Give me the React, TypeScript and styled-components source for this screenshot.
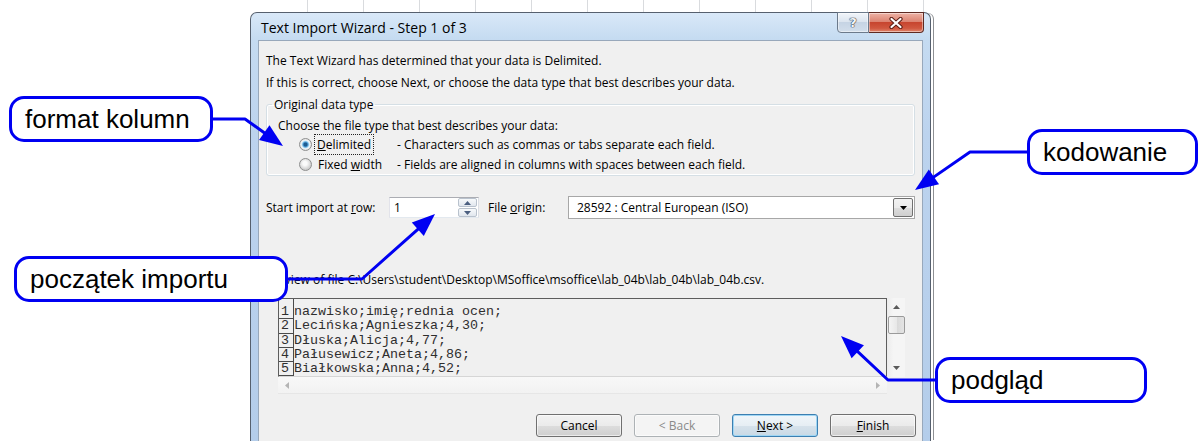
import React from "react";
import styled, { createGlobalStyle } from "styled-components";

type Pt = [number, number];

const BLUE = "#0000f2";
const UI_FONT = `"Open Sans", "Noto Sans", "Liberation Sans", sans-serif`;

const GlobalStyle = createGlobalStyle`
  html, body {
    margin: 0;
    padding: 0;
    background: #fff;
  }
  body {
    font-family: "Liberation Sans", Arial, sans-serif;
  }
`;

const Page = styled.div`
  position: relative;
  width: 1200px;
  height: 441px;
  overflow: hidden;
  background: #fff;
`;

// spreadsheet visible behind the dialog
const Sheet = styled.div`
  margin-left: 244px;
  width: 702px;
  height: 441px;
  padding: 12px 0 0 6px;
  box-sizing: border-box;
  background-color: #fff;
  background-image: repeating-linear-gradient(90deg, transparent 0 55px, #d9dbde 55px 56px);
  background-position: 8px 0;
`;

const Window = styled.div`
  width: 681px;
  height: 429px;
  box-sizing: border-box;
  border: 1px solid #56606e;
  border-bottom: none;
  border-radius: 7px 7px 0 0;
  padding: 0 7px;
  background: linear-gradient(180deg, #d9e8f8 0px, #c5dbf1 26px, #bcd3ee 120px, #b4cdea 100%);
  box-shadow: 3px 0 0 -1px #fff, 4px 0 0 -1px #8e9094;
  font-family: ${UI_FONT};
`;

const TitleBar = styled.div`
  height: 27px;
  display: flex;
  align-items: center;
  padding-left: 3px;
`;

const Title = styled.span`
  flex: 1;
  font-size: 14px;
  color: #000;
  padding-top: 1px;
`;

const CaptionButtons = styled.div`
  align-self: flex-start;
  display: flex;
  margin-top: -1px;
  margin-right: -1px;
`;

const CaptionButton = styled.div<{ $close?: boolean }>`
  width: ${(p) => (p.$close ? 55 : 32)}px;
  height: 21px;
  box-sizing: border-box;
  display: flex;
  align-items: center;
  justify-content: center;
  border: 1px solid ${(p) => (p.$close ? "#5e2a22" : "#6c7a8b")};
  border-left-width: ${(p) => (p.$close ? 0 : 1)}px;
  border-radius: ${(p) => (p.$close ? "0 0 4px 0" : "0 0 0 4px")};
  background: ${(p) =>
    p.$close
      ? "linear-gradient(180deg, #eeb3a6 0%, #dc8472 45%, #c7452f 50%, #d0573f 80%, #e0866f 100%)"
      : "linear-gradient(180deg, #f1f5fa 0%, #dce5ef 45%, #c6d4e4 50%, #d2deeb 100%)"};
  box-shadow: inset 0 0 0 1px rgba(255, 255, 255, 0.45);
`;

const HelpGlyph = styled.span`
  font: bold 13px "DejaVu Sans", sans-serif;
  color: #f3f6fa;
  text-shadow: 0 0 1px #2b3340, 0 0 1px #2b3340, 0 0 1px #2b3340;
`;

const Body = styled.div`
  height: 401px;
  box-sizing: border-box;
  background: #f0f0f0;
  border: 1px solid #98a8bb;
  border-bottom: none;
  padding: 12px 7px 0;
  font-size: 12px;
  line-height: 15px;
  color: #000;
`;

const Line = styled.p<{ $gap?: number }>`
  margin: ${(p) => p.$gap ?? 0}px 0 0;
  white-space: nowrap;
`;

const U = styled.span`
  text-decoration: underline;
  text-underline-offset: 1px;
`;

const Group = styled.fieldset`
  margin: 7px 0 0;
  padding: 0 6px 2px 5px;
  border: 1px solid #d5dfe5;
  border-radius: 3px;
  box-shadow: inset 0 0 0 1px #fff;
  min-width: 0;
`;

const Legend = styled.legend`
  padding: 0 2px;
  line-height: 15px;
`;

const GroupBody = styled.div`
  padding: 6px 0 0 6px;
`;

const RadioRow = styled.div<{ $gap: number }>`
  display: flex;
  align-items: center;
  height: 18px;
  margin: ${(p) => p.$gap}px 0 0 21px;
  white-space: nowrap;
`;

const RadioMark = styled.span<{ $checked?: boolean }>`
  width: 13px;
  height: 13px;
  box-sizing: border-box;
  margin-right: 6px;
  border-radius: 50%;
  border: 1px solid #8e8f8f;
  background: ${(p) =>
    p.$checked
      ? "radial-gradient(circle at 50% 50%, #1f5c91 0 1.5px, #5aa7dc 2.6px, #bfe3f8 3.6px, #f4f4f4 4.3px, #dadada 6px)"
      : "radial-gradient(circle at 45% 40%, #fbfbfb 0 2px, #e6e6e6 4px, #cfcfcf 6px)"};
`;

const RadioLabel = styled.span`
  width: 79px;
  flex: none;
`;

const FocusText = styled.span`
  outline: 1px dotted #222;
  outline-offset: 1px;
  padding: 0 1px;
  margin-left: -2px;
`;

const ImportRow = styled.div`
  display: flex;
  align-items: center;
  height: 23px;
  margin-top: 20px;
`;

const FieldLabel = styled.span<{ $w: number; $gap?: number }>`
  width: ${(p) => p.$w}px;
  flex: none;
  margin-left: ${(p) => p.$gap ?? 0}px;
  white-space: nowrap;
`;

const SpinBox = styled.div`
  width: 90px;
  height: 21px;
  box-sizing: border-box;
  display: flex;
  background: #fff;
  border: 1px solid;
  border-color: #abadb3 #dbdfe6 #e3e9ef #e2e3ea;
`;

const SpinValue = styled.span`
  flex: 1;
  padding-left: 4px;
  line-height: 19px;
`;

const SpinButtons = styled.div`
  width: 19px;
  display: flex;
  flex-direction: column;
  gap: 1px;
  padding: 0 1px 0 0;
`;

const SpinButton = styled.div`
  flex: 1;
  display: flex;
  align-items: center;
  justify-content: center;
  border: 1px solid #b9c2cd;
  border-radius: 2px;
  background: linear-gradient(180deg, #f7f9fb, #e1e7ee);
`;

const Combo = styled.div`
  flex: 1;
  height: 23px;
  box-sizing: border-box;
  display: flex;
  align-items: center;
  background: #fff;
  border: 1px solid #a7a7a7;
`;

const ComboText = styled.span`
  flex: 1;
  padding-left: 8px;
  white-space: nowrap;
`;

const ComboButton = styled.div`
  width: 20px;
  height: 19px;
  box-sizing: border-box;
  margin-right: 1px;
  display: flex;
  align-items: center;
  justify-content: center;
  border: 1px solid #707070;
  border-radius: 2px;
  background: linear-gradient(180deg, #f2f2f2 0%, #ebebeb 50%, #dddddd 51%, #cfcfcf 100%);
`;

const PreviewFrame = styled.div`
  margin: 11px 0 0 12px;
  display: grid;
  grid-template-columns: 609px 18px;
  grid-template-rows: 79px 17px;
`;

const PreviewBox = styled.div`
  display: flex;
  overflow: hidden;
  box-sizing: border-box;
  border: 1px solid #5d5d5d;
  border-bottom-color: #d6d6d6;
  background: #f0f0f0;
  font-family: "Liberation Mono", "Courier New", monospace;
  font-size: 13.33px;
  line-height: 14.3px;
  color: #2e2e2e;
`;

const NumColumn = styled.div`
  width: 14px;
  flex: none;
  padding-top: 6px;
  border-right: 1px solid #4a4a4a;
`;

const NumCell = styled.div`
  height: 14.3px;
  box-sizing: border-box;
  padding-left: 2px;
  border-bottom: 1px solid #4a4a4a;
`;

const TextColumn = styled.div`
  padding-top: 6px;
  white-space: pre;
`;

const VScroll = styled.div`
  display: flex;
  flex-direction: column;
  align-items: center;
  background: linear-gradient(90deg, #ebebeb 0%, #f5f5f5 35%, #f5f5f5 100%);
`;

const ScrollEnd = styled.div<{ $h: number }>`
  height: ${(p) => p.$h}px;
  width: 100%;
  display: flex;
  align-items: center;
  justify-content: center;
`;

const Thumb = styled.div`
  width: 17px;
  height: 18px;
  box-sizing: border-box;
  border: 1px solid #9a9a9a;
  border-radius: 2px;
  background: linear-gradient(90deg, #f4f4f4 0%, #e8e8e8 50%, #d9d9d9 51%, #e4e4e4 100%);
`;

const Track = styled.div`
  flex: 1;
`;

const HScroll = styled.div`
  display: flex;
  align-items: center;
  justify-content: space-between;
  padding: 0 7px;
  background: linear-gradient(180deg, #f8f8f8, #f2f2f2);
  border-bottom: 1px solid #e6e6e6;
`;

const Corner = styled.div`
  background: #f0f0f0;
`;

const ButtonRow = styled.div`
  display: flex;
  justify-content: flex-end;
  gap: 12px;
  margin-top: 20px;
  margin-right: -1px;
`;

const DialogButton = styled.div<{ $variant?: "default" | "disabled" }>`
  width: 86px;
  height: 23px;
  box-sizing: border-box;
  display: flex;
  align-items: center;
  justify-content: center;
  border-radius: 3px;
  border: 1px solid
    ${(p) => (p.$variant === "default" ? "#3c7fb1" : p.$variant === "disabled" ? "#adb2b5" : "#707070")};
  color: ${(p) => (p.$variant === "disabled" ? "#8a8a8a" : "#000")};
  background: ${(p) =>
    p.$variant === "disabled"
      ? "#f4f4f4"
      : p.$variant === "default"
      ? "linear-gradient(180deg, #f0f6fa 0%, #e6eef4 50%, #d6e2eb 51%, #c9d9e5 100%)"
      : "linear-gradient(180deg, #f2f2f2 0%, #ebebeb 50%, #dddddd 51%, #cfcfcf 100%)"};
  box-shadow: ${(p) => (p.$variant === "default" ? "inset 0 0 0 1px #9fd6f4" : "inset 0 0 0 1px rgba(255,255,255,0.6)")};
`;

const Callout = styled.div<{ $x: number; $y: number; $w: number }>`
  position: absolute;
  left: ${(p) => p.$x}px;
  top: ${(p) => p.$y}px;
  width: ${(p) => p.$w}px;
  height: 46px;
  box-sizing: border-box;
  display: flex;
  align-items: center;
  padding-left: 13px;
  border: 3px solid ${BLUE};
  border-radius: 15px;
  background: #fff;
  font-family: "Liberation Sans", Arial, sans-serif;
  font-size: 26px;
  color: #000;
  white-space: nowrap;
`;

const ArrowLayer = styled.svg`
  position: absolute;
  left: 0;
  top: 0;
  pointer-events: none;
`;

function Tri({ dir, color = "#4b5f80", w = 7, h = 4 }: { dir: "up" | "down" | "left" | "right"; color?: string; w?: number; h?: number }) {
  const vert = dir === "up" || dir === "down";
  const W = vert ? w : h;
  const H = vert ? h : w;
  const pts =
    dir === "up"
      ? `0,${H} ${W / 2},0 ${W},${H}`
      : dir === "down"
      ? `0,0 ${W},0 ${W / 2},${H}`
      : dir === "left"
      ? `${W},0 0,${H / 2} ${W},${H}`
      : `0,0 ${W},${H / 2} 0,${H}`;
  return (
    <svg width={W} height={H} viewBox={`0 0 ${W} ${H}`}>
      <polygon points={pts} fill={color} />
    </svg>
  );
}

function CloseGlyph() {
  return (
    <svg width="14" height="12" viewBox="0 0 14 12">
      <path d="M2.5 2 L11.5 10 M11.5 2 L2.5 10" stroke="#5a1e16" strokeWidth="4.2" strokeLinecap="round" />
      <path d="M2.5 2 L11.5 10 M11.5 2 L2.5 10" stroke="#fff" strokeWidth="2.2" strokeLinecap="round" />
    </svg>
  );
}

function Arrow({ points }: { points: Pt[] }) {
  const [tx, ty] = points[points.length - 1];
  const [px, py] = points[points.length - 2];
  const len = Math.hypot(tx - px, ty - py);
  const ux = (tx - px) / len;
  const uy = (ty - py) / len;
  const head = 23;
  const half = 9;
  const bx = tx - ux * head;
  const by = ty - uy * head;
  const shaft = [...points.slice(0, -1), [bx + ux * 3, by + uy * 3]]
    .map(([x, y]) => `${x},${y}`)
    .join(" ");
  return (
    <g>
      <polyline points={shaft} fill="none" stroke={BLUE} strokeWidth={3} strokeLinejoin="round" />
      <polygon
        points={`${tx},${ty} ${bx - uy * half},${by + ux * half} ${bx + uy * half},${by - ux * half}`}
        fill={BLUE}
      />
    </g>
  );
}

const callouts: { label: string; x: number; y: number; w: number; arrow: Pt[] }[] = [
  { label: "format kolumn", x: 9, y: 96, w: 204, arrow: [[211, 119], [245, 119], [283, 146]] },
  { label: "początek importu", x: 14, y: 256, w: 274, arrow: [[286, 279], [362, 279], [435, 214]] },
  { label: "kodowanie", x: 1027, y: 129, w: 171, arrow: [[1028, 152], [970, 152], [915, 190]] },
  { label: "podgląd", x: 935, y: 357, w: 212, arrow: [[936, 380], [888, 380], [841, 336]] },
];

const previewRows = [
  "nazwisko;imię;rednia ocen;",
  "Lecińska;Agnieszka;4,30;",
  "Dłuska;Alicja;4,77;",
  "Pałusewicz;Aneta;4,86;",
  "Białkowska;Anna;4,52;",
];

const filePath = "C:\\Users\\student\\Desktop\\MSoffice\\msoffice\\lab_04b\\lab_04b\\lab_04b.csv.";

export default function App() {
  return (
    <Page>
      <GlobalStyle />
      <Sheet>
        <Window>
          <TitleBar>
            <Title>Text Import Wizard - Step 1 of 3</Title>
            <CaptionButtons>
              <CaptionButton>
                <HelpGlyph>?</HelpGlyph>
              </CaptionButton>
              <CaptionButton $close>
                <CloseGlyph />
              </CaptionButton>
            </CaptionButtons>
          </TitleBar>

          <Body>
            <Line>The Text Wizard has determined that your data is Delimited.</Line>
            <Line $gap={7}>If this is correct, choose Next, or choose the data type that best describes your data.</Line>

            <Group>
              <Legend>Original data type</Legend>
              <GroupBody>
                <Line>Choose the file type that best describes your data:</Line>
                <RadioRow $gap={2}>
                  <RadioMark $checked />
                  <RadioLabel>
                    <FocusText>
                      <U>D</U>elimited
                    </FocusText>
                  </RadioLabel>
                  <span>- Characters such as commas or tabs separate each field.</span>
                </RadioRow>
                <RadioRow $gap={2}>
                  <RadioMark />
                  <RadioLabel>
                    Fixed <U>w</U>idth
                  </RadioLabel>
                  <span>- Fields are aligned in columns with spaces between each field.</span>
                </RadioRow>
              </GroupBody>
            </Group>

            <ImportRow>
              <FieldLabel $w={123}>
                Start import at <U>r</U>ow:
              </FieldLabel>
              <SpinBox>
                <SpinValue>1</SpinValue>
                <SpinButtons>
                  <SpinButton>
                    <Tri dir="up" w={7} h={4} />
                  </SpinButton>
                  <SpinButton>
                    <Tri dir="down" w={7} h={4} />
                  </SpinButton>
                </SpinButtons>
              </SpinBox>
              <FieldLabel $w={80} $gap={9}>
                File <U>o</U>rigin:
              </FieldLabel>
              <Combo>
                <ComboText>28592 : Central European (ISO)</ComboText>
                <ComboButton>
                  <Tri dir="down" color="#000" w={7} h={4} />
                </ComboButton>
              </Combo>
            </ImportRow>

            <Line $gap={53}>Preview of file {filePath}</Line>

            <PreviewFrame>
              <PreviewBox>
                <NumColumn>
                  {[1, 2, 3, 4, 5, 6].map((n) => (
                    <NumCell key={n}>{n < 6 ? n : ""}</NumCell>
                  ))}
                </NumColumn>
                <TextColumn>
                  {previewRows.map((row) => (
                    <div key={row}>{row}</div>
                  ))}
                </TextColumn>
              </PreviewBox>
              <VScroll>
                <ScrollEnd $h={18}>
                  <Tri dir="up" color="#5a5a5a" />
                </ScrollEnd>
                <Thumb />
                <Track />
                <ScrollEnd $h={18}>
                  <Tri dir="down" color="#5a5a5a" />
                </ScrollEnd>
              </VScroll>
              <HScroll>
                <Tri dir="left" color="#b4b4b4" />
                <Tri dir="right" color="#b4b4b4" />
              </HScroll>
              <Corner />
            </PreviewFrame>

            <ButtonRow>
              <DialogButton>Cancel</DialogButton>
              <DialogButton $variant="disabled">&lt; Back</DialogButton>
              <DialogButton $variant="default">
                <span>
                  <U>N</U>ext &gt;
                </span>
              </DialogButton>
              <DialogButton>
                <span>
                  <U>F</U>inish
                </span>
              </DialogButton>
            </ButtonRow>
          </Body>
        </Window>
      </Sheet>

      <ArrowLayer width={1200} height={441} viewBox="0 0 1200 441">
        {callouts.map((c) => (
          <Arrow key={c.label} points={c.arrow} />
        ))}
      </ArrowLayer>

      {callouts.map((c) => (
        <Callout key={c.label} $x={c.x} $y={c.y} $w={c.w}>
          {c.label}
        </Callout>
      ))}
    </Page>
  );
}
